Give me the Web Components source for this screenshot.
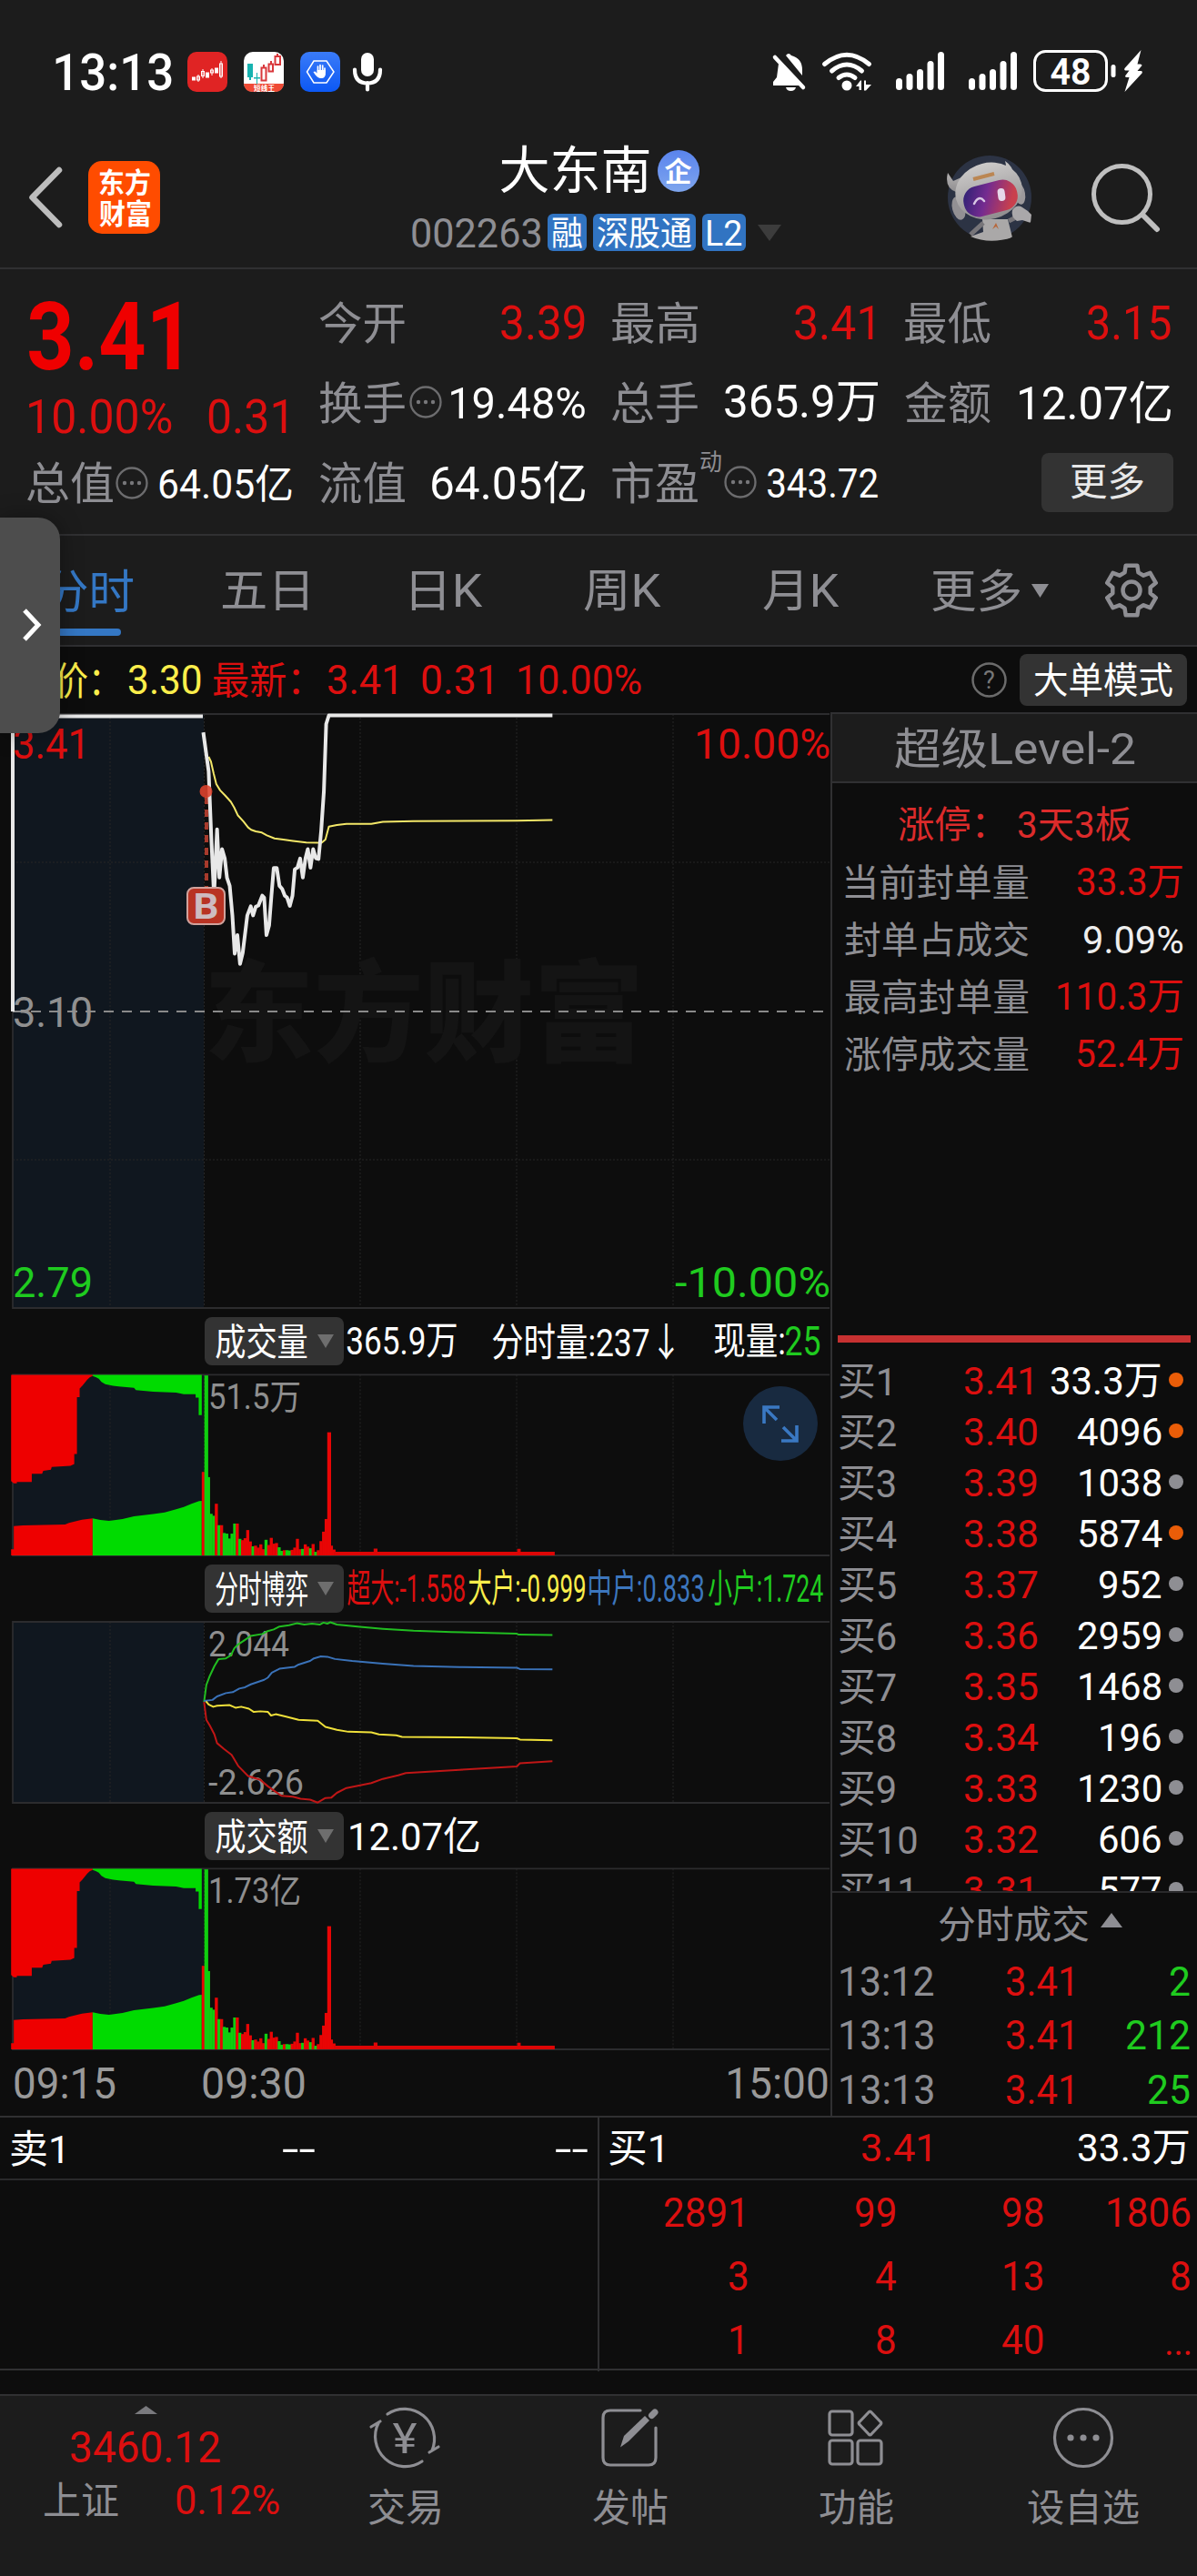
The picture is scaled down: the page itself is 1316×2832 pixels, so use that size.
<!DOCTYPE html>
<html lang="zh-CN">
<head>
<meta charset="utf-8">
<meta name="viewport" content="width=1316">
<title>大东南 002263</title>
<style>
    html, body {
        margin: 0;
        background: #0d0d0d;
    }
    body {
        position: relative;
        width: 1316px;
        height: 2832px;
        overflow: hidden;
        color: #fff;
        font-family: Roboto, "Noto Sans CJK SC", sans-serif;
        --panel: #1c1c1c;
        --line: #303032;
        --muted: #8e8e93;
        --red: #dc0f0f;
        --green: #1fcb1f;
        --blue: #3477c4;
        --yellow: #fbee4b;
    }
</style>
</head>
<body>
<status-bar></status-bar>
<stock-header></stock-header>
<quote-summary></quote-summary>
<period-tabs></period-tabs>
<price-legend></price-legend>
<trade-board></trade-board>
<order-queue></order-queue>
<bottom-nav></bottom-nav>
<side-handle></side-handle>

<script>
const FONT = 'Roboto, "Noto Sans CJK SC", sans-serif';
const pen = document.createElement('canvas').getContext('2d');

// Base class: puts the markup and styles of an element in an open shadow root
class Base extends HTMLElement {
    constructor() {
        super();
        this.attachShadow({ mode: 'open' });
    }

    connectedCallback() {
        this.shadowRoot.innerHTML = `<style>${this.css()}</style>${this.html()}`;
    }

    css() { return ''; }
    html() { return ''; }
}

// One line of text. s = font size, w = width of the drawn glyphs,
// k = horizontal condensing when there is no fixed width.
class FitText extends HTMLElement {
    constructor() {
        super();
        this.attachShadow({ mode: 'open' });
    }

    connectedCallback() {
        const size = +this.getAttribute('s') || 42;
        const weight = this.getAttribute('b') || 400;
        const w = +this.getAttribute('w');
        pen.font = `${weight} ${size}px ${FONT}`;
        const m = pen.measureText(this.textContent.trim());
        const ink = m.actualBoundingBoxLeft + m.actualBoundingBoxRight;
        const k = w ? w / ink : +this.getAttribute('k') || 0.96;
        const dx = w ? m.actualBoundingBoxLeft * k : 0;
        const base = (size + m.fontBoundingBoxAscent - m.fontBoundingBoxDescent) / 2;
        const mid = base - (m.actualBoundingBoxAscent - m.actualBoundingBoxDescent) / 2;
        const box = w || m.width * k;
        this.shadowRoot.innerHTML = `
            <style>
                :host { display: block; flex: none; width: ${box}px; height: ${size}px; }
                span {
                    display: block;
                    width: max-content;
                    font: ${weight} ${size}px/1 ${FONT};
                    white-space: nowrap;
                    transform-origin: 0 0;
                    transform: matrix(${k}, 0, 0, 1, ${dx}, ${size / 2 - mid});
                }
            </style>
            <span><slot></slot></span>`;
    }
}
customElements.define('fit-text', FitText);

class StatusBar extends Base {
    css() {
        return `
            :host { display: flex; align-items: center; height: 158px; box-sizing: border-box; background: var(--panel); }
            svg { display: block; flex: none; }
            fit-text { margin-left: 61px; }
            .right { margin-left: auto; }`;
    }
    html() {
        const signal = x => [[0, 86], [11.5, 81], [23, 76], [34.5, 67], [46, 57]]
            .map(([dx, y]) => `<rect x="${x + dx}" y="${y}" width="7" height="${99 - y}" rx="3.5"/>`).join('');
        const candle = (x, y, h, solid) => `<rect x="${x}" y="${y}" width="3" height="${h}" fill="${solid ? '#fff' : 'none'}"/>`;
        return `
            <fit-text s="55" w="128" b="500">13:13</fit-text>
            <svg width="240" height="158" viewBox="189 0 240 158">
                <defs><linearGradient id="g" x2="0" y2="1"><stop stop-color="#3a7bf8"/><stop offset="1" stop-color="#0c58f4"/></linearGradient></defs>
                <rect x="206" y="57" width="44" height="44" rx="10" fill="#e02424"/>
                <g stroke="#fff" stroke-width="1">
                    ${candle(211.5, 85, 3, 1)}${candle(216.5, 84, 4)}${candle(221.5, 78.5, 5)}${candle(226.5, 80, 5, 1)}${candle(231.5, 77, 3)}${candle(236.5, 75, 5, 1)}${candle(241.5, 70, 14)}
                    <path d="M218 82v8M223 76v10M233 75v8M243 67v19"/>
                </g>
                <rect x="268" y="57" width="44" height="44" rx="10" fill="#fff"/>
                <path d="M268 92h44q-1 9-10 9h-24q-9 0-10-9z" fill="#ef4a35"/>
                <g fill="none" stroke="#d9383c" stroke-width="2">
                    <rect x="287.500" y="74.500" width="5" height="14"/><rect x="295.500" y="70.500" width="4.500" height="8"/><rect x="302.500" y="62" width="5.500" height="9"/>
                    <path d="M290 71v3M298 67v3M305 59v3"/>
                </g>
                <path d="M272 70h6v15h-2v3h-2v-3h-2zM282 80h1v5h3v1.500h-3v6h-1v-6h-3v-1.500h3z" fill="#17b3b0"/>
                <text x="279" y="99.500" font-size="7.500" textLength="23" fill="#fff" font-weight="700" font-family='"Noto Sans CJK SC"'>短线王</text>
                <rect x="330" y="57" width="44" height="44" rx="10" fill="url(#g)"/>
                <path d="M345 67h14l8 12-8 12h-14l-7.500-12z" fill="none" stroke="#fff" stroke-width="1.500"/>
                <path d="M349.500 79v-6M352 78v-6.500M354.700 78v-6M357 79v-4" stroke="#fff" stroke-width="1.700" stroke-linecap="round"/>
                <path d="M348.600 77h9.300v5q-1 4-4 4h-2q-4-1-7.500-7l2-.5 2.200 2z" fill="#fff"/>
                <rect x="397" y="58" width="14" height="26" rx="7" fill="#fff"/>
                <path d="M390 76.500q0 15 14 15t14-15M404 91v7.500" fill="none" stroke="#fff" stroke-width="4.200" stroke-linecap="round"/>
            </svg>
            <svg class="right" width="476" height="158" viewBox="840 0 476 158" fill="#fff">
                <path d="M864 61q3-4 6 0 12 3 12 16v6z"/>
                <path d="M856 70L882 94H850v-4l4-5zM864 96h11q-1 4-5.500 4T864 96z"/>
                <path d="M852 63l31 33" stroke="#fff" stroke-width="4.500" stroke-linecap="round"/>
                <g fill="none" stroke="#fff" stroke-width="5" stroke-linecap="round">
                    <path d="M906.500 70.500q24.500-20.500 49 0M914.500 78q16.500-14 33 0M922 85.500q9-7 18 0"/>
                </g>
                <circle cx="931" cy="94" r="5.500"/>
                <path d="M941 95l5-6.500h1V99h-2.500v-4zM950 88.500h2V93h6l-6 6.500h-2z"/>
                ${signal(985)}${signal(1065)}
                <rect x="1137.500" y="56.500" width="79" height="43" rx="12" fill="none" stroke="#fff" stroke-width="3"/>
                <text x="1154.500" y="92.500" font-size="40" font-weight="600" textLength="45" lengthAdjust="spacingAndGlyphs" font-family="Roboto">48</text>
                <rect x="1221.500" y="71" width="5" height="14" rx="2.500"/>
                <path d="M1254.500 55l-18 20q-1 2 1 2.500h4l-4.500 6q0 1.500 2 1.500h2.500l-5 16 19-20.500q1-2-1-2.500h-4l5-6q0-1.500-2-1.500h-3z"/>
            </svg>`;
    }
}
customElements.define('status-bar', StatusBar);

class StockHeader extends Base {
    css() {
        return `
            :host {
                display: grid;
                grid-template-columns: 450px 1fr 290px;
                height: 138px;
                box-sizing: border-box;
                background: var(--panel);
                border-bottom: 2px solid var(--line);
            }
            svg { display: block; flex: none; }
            .left { display: flex; padding: 19px 0 0 30px; }
            .logo {
                display: grid;
                align-content: center;
                justify-items: center;
                gap: 3px;
                width: 79px;
                height: 80px;
                margin-left: 27px;
                border-radius: 15px;
                background: #ff4c00;
            }
            .name { display: flex; align-items: center; height: 56px; padding: 0 0 0 100.5px; }
            .badge {
                display: grid;
                place-items: center;
                width: 46px;
                height: 46px;
                margin: 3px 0 0 9px;
                border-radius: 50%;
                background: linear-gradient(#5a84ee, #7ea5ed);
            }
            .code { display: flex; align-items: center; margin-top: 21px; height: 41px; padding-left: 3px; color: var(--muted); }
            .tag { display: grid; place-items: center; height: 41px; border-radius: 6px; margin-left: 7px; color: #fff; background: #3174c2; }
            .tag:first-of-type { margin-left: 8px; }
            .tools { display: flex; padding: 13px 0 0 15px; }`;
    }
    html() {
        return `
            <div class="left">
                <svg width="40" height="80" viewBox="0 0 40 80"><path d="M35 10L5.500 40l29.500 30" fill="none" stroke="#bdbdbd" stroke-width="6.500" stroke-linecap="round" stroke-linejoin="round"/></svg>
                <div class="logo"><fit-text s="31" w="56" b="700">东方</fit-text><fit-text s="31" w="56" b="700">财富</fit-text></div>
            </div>
            <div>
                <div class="name">
                    <fit-text s="56" w="163">大东南</fit-text>
                    <span class="badge"><fit-text s="30" w="30" b="700">企</fit-text></span>
                </div>
                <div class="code">
                    <fit-text s="44" w="141">002263</fit-text>
                    <div class="tag" style="width:43px"><fit-text s="37" w="33">融</fit-text></div>
                    <div class="tag" style="width:113px"><fit-text s="37" w="103">深股通</fit-text></div>
                    <div class="tag" style="width:48px"><fit-text s="38" w="37">L2</fit-text></div>
                    <svg style="margin-left:12px" width="28" height="20"><path d="M1 1h26L14 19z" fill="#3c3c3c"/></svg>
                </div>
            </div>
            <div class="tools">
                <svg width="96" height="94" viewBox="0 0 96 94">
                    <defs>
                        <linearGradient id="visor" y2=".3"><stop stop-color="#252070"/><stop offset=".5" stop-color="#742b90"/><stop offset="1" stop-color="#c9404d"/></linearGradient>
                        <linearGradient id="shell" x2="0" y2="1"><stop stop-color="#cccac9"/><stop offset="1" stop-color="#8f8d8f"/></linearGradient>
                        <clipPath id="disc"><path d="M0 0H96V70L66 94H26L0 72z"/></clipPath>
                    </defs>
                    <circle cx="47" cy="46" r="46" fill="#2c3344"/>
                    <g clip-path="url(#disc)">
                        <path d="M39 70h28l5 20q-25 8-46-1l14-5z" fill="#aaa8a8"/>
                        <path d="M40 74l-14 13M68 72l8-4" stroke="#777579" stroke-width="5"/>
                        <path d="M72 60q5-7 11-3l6 4 4 4-1 9-9-3-6 1q-7-5-5-12z" fill="#aaa8aa"/>
                        <path d="M50 81l4-7 3 7-3-3z" fill="#b8673a"/>
                        <path d="M10 40Q-3 35 1 19l6 9 9-4zM59 17q8-1 5-11 12 8 9 22z" fill="url(#shell)"/>
                        <ellipse cx="13" cy="58" rx="7" ry="13" fill="#929093" transform="rotate(-15 13 58)"/>
                        <ellipse cx="80" cy="42" rx="6" ry="12" fill="#9c999c" transform="rotate(-10 80 42)"/>
                        <ellipse cx="46" cy="39" rx="37" ry="31" fill="url(#shell)" transform="rotate(-14 46 39)"/>
                        <rect x="18" y="30" width="60" height="34" rx="16" fill="url(#visor)" transform="rotate(-14 48 47)"/>
                        <path d="M30 53q5-10 11-3" fill="none" stroke="#d9c7e4" stroke-width="2.500" stroke-linecap="round"/>
                        <rect x="56" y="36" width="8" height="14" rx="4" fill="#e6d8ea" transform="rotate(-8 60 43)"/>
                        <path d="M29 26l23-6" stroke="#bb8652" stroke-width="4"/>
                    </g>
                </svg>
                <svg style="margin-left:60px" width="84" height="94" viewBox="1197 171 84 94">
                    <g fill="none" stroke="#bfbfbf" stroke-width="5"><circle cx="1233.500" cy="213.500" r="31"/><path d="M1256 236l16 16" stroke-linecap="round" stroke-width="6"/></g>
                </svg>
            </div>`;
    }
}
customElements.define('stock-header', StockHeader);

// Circled three dots behind a label
class MoreDots extends Base {
    css() { return ':host { display: block; flex: none; width: 36px; height: 36px; } svg { display: block; }'; }
    html() {
        return `<svg width="36" height="36"><circle cx="18" cy="18" r="16.500" fill="none" stroke="#6c6c6e" stroke-width="2.300"/>
            <g fill="#77777a"><circle cx="10" cy="18" r="2.200"/><circle cx="18" cy="18" r="2.200"/><circle cx="26" cy="18" r="2.200"/></g></svg>`;
    }
}
customElements.define('more-dots', MoreDots);

class QuoteSummary extends Base {
    css() {
        return `
            :host {
                display: grid;
                grid-template-columns: repeat(4, 292px);
                column-gap: 30px;
                height: 293px;
                box-sizing: border-box;
                padding: 14px 0 0 30px;
                background: var(--panel);
                border-bottom: 2px solid var(--line);
                color: #fff;
            }
            .main { display: grid; grid-template-rows: 117px 60px 87px; }
            .col { display: grid; grid-template-rows: repeat(3, 88px); margin-left: -1px; }
            .row { display: flex; align-items: center; padding-right: 1px; }
            .row > :last-child { margin-left: auto; }
            .label { color: var(--muted); }
            .up { color: var(--red); }
            .price { color: #ef0000; padding-left: 2px; }
            .row > .start { margin-left: 0; }
            sup { display: block; margin: -46px 0 0 3px; }
            more-dots { margin-left: 5px; }
            .more { display: grid; place-items: center; box-sizing: border-box; width: 145px; height: 65px; margin-right: -3px; padding-bottom: 3px; border-radius: 8px; background: #333; color: #e8e8e8; }`;
    }
    cell(label, w, value, vw, size = 50, up = '', inset = 0) {
        return `<div class="row" style="padding-right:${inset || 1}px"><fit-text class="label" s="49" w="94">${label}</fit-text>${w}<fit-text class="${up}" s="${size}" w="${vw}">${value}</fit-text></div>`;
    }
    html() {
        const dots = '<more-dots></more-dots>';
        return `
            <div class="main">
                <div class="row price"><fit-text class="start" s="103" w="165" b="700">3.41</fit-text></div>
                <div class="row up" style="padding:0 7px 0 2px"><fit-text s="51" w="157">10.00%</fit-text><fit-text s="51" w="86">0.31</fit-text></div>
                ${this.cell('总值', dots.replace('>', ' style="margin-left:3px">'), '64.05亿', 146, 44)}
            </div>
            <div class="col">
                ${this.cell('今开', '', '3.39', 92, 51, 'up')}
                ${this.cell('换手', dots, '19.48%', 147, 49)}
                ${this.cell('流值', '', '64.05亿', 168)}
            </div>
            <div class="col">
                ${this.cell('最高', '', '3.41', 86, 51, 'up', 6)}
                ${this.cell('总手', '', '365.9万', 168)}
                ${this.cell('市盈', '<sup><fit-text class="label" s="26" w="23">动</fit-text></sup><more-dots style="margin-left:3px"></more-dots>', '343.72', 121, 45)}
            </div>
            <div class="col">
                ${this.cell('最低', '', '3.15', 91, 51, 'up')}
                ${this.cell('金额', '', '12.07亿', 166)}
                <div class="row"><span class="more"><fit-text s="43" w="79">更多</fit-text></span></div>
            </div>`;
    }
}
customElements.define('quote-summary', QuoteSummary);

class PeriodTabs extends Base {
    css() {
        return `
            :host {
                display: grid;
                grid-template-columns: 194px 194px 197px 195px 197px 207px 132px;
                height: 122px;
                box-sizing: border-box;
                background: var(--panel);
                border-bottom: 2px solid var(--line);
                color: var(--muted);
            }
            div { display: flex; justify-content: center; align-items: center; box-sizing: border-box; }
            .on { color: var(--blue); flex-direction: column; justify-content: flex-end; gap: 16px; padding-left: 2px; }
            .on::after { content: ""; width: 70px; height: 8px; margin-bottom: 10px; border-radius: 4px; background: var(--blue); }
            svg { display: block; }`;
    }
    gear() {
        const pts = [];
        for (let k = 0; k < 6; k++) {
            [[-21, 21], [-13, 28], [13, 28], [21, 21]].forEach(([a, r]) => {
                const t = (k * 60 + a - 90) * Math.PI / 180;
                pts.push(`${(32 + r * Math.cos(t)).toFixed(1)},${(32 + r * Math.sin(t)).toFixed(1)}`);
            });
        }
        return pts.join(' ');
    }
    html() {
        return `
            <div class="on"><fit-text s="51" w="98">分时</fit-text></div>
            <div><fit-text s="50" w="94">五日</fit-text></div>
            <div style="padding-left:10px"><fit-text s="50" w="79">日K</fit-text></div>
            <div style="padding-left:4px"><fit-text s="50" w="85">周K</fit-text></div>
            <div style="padding-left:4px"><fit-text s="50" w="84">月K</fit-text></div>
            <div style="gap:12px; padding-left:17px"><fit-text s="50" w="97">更多</fit-text><svg width="19" height="15"><path d="M0 0h19L9.500 15z" fill="#8e8e93"/></svg></div>
            <div style="justify-content:flex-start; padding-left:28px"><svg width="64" height="64" fill="none" stroke="#8e8e93" stroke-width="4.500" stroke-linejoin="round"><polygon points="${this.gear()}"/><circle cx="32" cy="32" r="9.500"/></svg></div>`;
    }
}
customElements.define('period-tabs', PeriodTabs);

class PriceLegend extends Base {
    css() {
        return `
            :host { display: flex; align-items: center; height: 72px; padding-left: 24px; color: var(--red); }
            .avg { color: var(--yellow); }
            svg { display: block; margin-left: 363px; }
            .mode { display: grid; place-items: center; width: 184px; height: 57px; margin-left: 14px; border-radius: 8px; background: #333; color: #fff; }`;
    }
    html() {
        return `
            <fit-text class="avg" s="43" w="86">均价：</fit-text>
            <fit-text class="avg" s="44" w="79" style="margin-left:31.500px">3.30</fit-text>
            <fit-text s="42" w="95" style="margin-left:13.500px">最新：</fit-text>
            <fit-text s="44" w="74" style="margin-left:32px">3.41</fit-text>
            <fit-text s="44" w="76" style="margin-left:29px">0.31</fit-text>
            <fit-text s="44" w="135" style="margin-left:30px">10.00%</fit-text>
            <svg width="39" height="39"><circle cx="19.500" cy="19.500" r="18" fill="none" stroke="#6b6b6b" stroke-width="2.500"/><text x="19.500" y="29" text-anchor="middle" font-family="Roboto" font-size="27" fill="#777">?</text></svg>
            <span class="mode"><fit-text s="40" w="152">大单模式</fit-text></span>`;
    }
}
customElements.define('price-legend', PriceLegend);

const GRID_X = [121, 224.5, 396, 568, 740];

function frame(top, bottom) {
    return `
        <rect x="14" y="${top}" width="210" height="${bottom - top}" fill="#10171f"/>
        <g stroke="#262626" stroke-dasharray="2 2">${GRID_X.map(x => `<path d="M${x} ${top}V${bottom}"/>`).join('')}</g>
        <path d="M912 ${top}H14V${bottom}H912" fill="none" stroke="#2c2c2e" stroke-width="1.800"/>`;
}

function label(x, y, w, size, color, text) {
    return `<text x="${x}" y="${y}" textLength="${w}" lengthAdjust="spacingAndGlyphs" font-size="${size}" fill="${color}">${text}</text>`;
}

const CHART_CSS = `
    :host { display: block; }
    svg { display: block; font-family: Roboto, "Noto Sans CJK SC", sans-serif; }
    polyline { fill: none; vector-effect: non-scaling-stroke; stroke-linejoin: round; }`;

class PriceChart extends Base {
    css() { return CHART_CSS; }
    html() {
        return `
            <svg width="914" height="657" viewBox="0 783 914 657">
                ${frame(785, 1438)}
                <g stroke="#262626" stroke-dasharray="2 2"><path d="M14 948H912M14 1275H912"/></g>
                <text x="224" y="1157" font-size="121" font-weight="900" textLength="484" fill="#141414">东方财富</text>
                <path d="M14 1112H912" stroke="#8a8a8a" stroke-width="2" stroke-dasharray="11 9"/>
                <path d="M14 1112V787.500H223" fill="none" stroke="#e8e8e8" stroke-width="4"/>
                ${label(14, 834, 85, 46, '#dc0f0f', '3.41')}
                ${label(14, 1129, 88, 46, '#909090', '3.10')}
                ${label(14, 1426, 88, 46, '#1fcb1f', '2.79')}
                ${label(763, 834, 150, 46, '#dc0f0f', '10.00%')}
                ${label(742, 1426, 171, 46, '#1fcb1f', '-10.00%')}
                <path d="M227 876V975" stroke="#a83a2c" stroke-width="4" stroke-dasharray="8 6"/>
                <g transform="translate(0 770) scale(.4209 .4337)">
                    <polyline stroke="#f3e768" stroke-width="2" points="545,143 551,155 558,185 565,212 575,228 588,241 603,257 612,272 621,291 636,307 648,322 656,328 668,332 684,335 697,342 717,350 740,353 765,356 800,360 840,361 850,353 859,320 880,316 905,313 970,313 1000,308 1080,306 1350,305 1443,303"/>
                    <polyline stroke="#e8e8e8" stroke-width="4" points="531,81 545,180 552,350 559,496 567,327 573,449 580,377 587,400 593,450 600,470 607,545 613,642 620,595 627,668 634,640 646,545 655,522 661,545 668,523 675,520 685,495 690,500 696,595 703,570 709,495 715,425 723,425 730,470 737,478 744,495 750,500 757,521 764,495 770,428 777,424 784,401 791,449 798,400 804,377 811,424 818,377 825,400 832,402 839,330 846,230 852,60 859,38 1443,38"/>
                </g>
                <circle cx="226.500" cy="870" r="7" fill="#e0432e" fill-opacity=".88"/>
                <rect x="206" y="976" width="41" height="40" rx="7" fill="#b83323" stroke="#d0a29c" stroke-width="2"/>
                <text x="226.500" y="1009.500" text-anchor="middle" textLength="28" lengthAdjust="spacingAndGlyphs" font-size="38" font-weight="700" fill="#cdbcc0">B</text>
            </svg>`;
    }
}
customElements.define('price-chart', PriceChart);

// [top, is red] of each minute bar after the opening
const BARS = [
    [527, 1], [230, 0], [543, 0], [656, 0], [662, 0], [625, 1], [691, 0], [691, 1], [715, 0], [717, 0],
    [732, 0], [717, 0], [686, 0], [686, 1], [733, 0], [737, 1], [731, 1], [706, 1], [741, 1], [756, 0],
    [754, 1], [760, 1], [750, 1], [765, 1], [736, 0], [752, 1], [730, 1], [748, 1], [746, 1], [759, 0],
    [770, 0], [768, 1], [768, 0], [769, 0], [767, 1], [760, 1], [733, 1], [765, 1], [764, 0], [750, 1],
    [757, 1], [762, 0], [749, 1], [773, 0], [768, 1], [740, 1], [711, 1], [672, 1], [405, 1], [754, 1], [766, 1]
];

class VolumeChart extends Base {
    css() {
        return CHART_CSS + `
            :host { position: relative; }
            .zoom { position: absolute; left: 817px; top: 14px; }`;
    }
    html() {
        const bars = BARS.map(([y, red], i) =>
            `<rect x="${(527 + i * 6.83).toFixed(1)}" y="${y}" width="${y < 420 ? 10 : 8}" height="${784 - y}" fill="${red ? '#e80505' : '#0fcf0f'}"/>`).join('');
        const zoom = this.hasAttribute('zoomable') ? `
            <svg class="zoom" width="82" height="82"><circle cx="41" cy="41" r="41" fill="#182a40"/>
                <g fill="none" stroke="#3a78c2" stroke-width="3.600"><path d="M23 41V23H40M24 24L37 37"/><path d="M59 43V60H42M58 59L44 45"/></g></svg>` : '';
        return `
            <svg width="914" height="202" viewBox="0 1510 914 202">
                ${frame(1511.4, 1710)}
                <g transform="translate(0 1430) scale(.4209 .3571)">
                    <path fill="#ee0000" d="M29 228H242V232L235 235 228 243 215 262 208 270V297H201V472H194V503L184 508 135 512 133 520 113 524 110 533H83V558H44V562H36L29 555z"/>
                    <path fill="#00db00" d="M242 228H527V352H519V298H511V288H480L460 283 400 280 355 275 350 268 310 264 295 262 275 257 265 250 258 240 250 235 242 232z"/>
                    <path fill="#ee0000" d="M29 765H36V694L60 692 170 689 180 684 214 674 242 670V784H29z"/>
                    <path fill="#00db00" d="M242 670L262 675 285 678 320 672 350 664 400 657 430 652 460 642 480 635 500 625 520 617 527 616V784H242z"/>
                    ${bars}
                    <path fill="#dd0606" d="M872 773H976V763H986V773H1351V764H1360V773H1449V784H872z"/>
                </g>
                ${label(229, 1549, 102, 38, '#8f8f8f', this.getAttribute('max'))}
            </svg>${zoom}`;
    }
}
customElements.define('volume-chart', VolumeChart);

class FlowChart extends Base {
    css() { return CHART_CSS; }
    html() {
        return `
            <svg width="914" height="203" viewBox="0 1781 914 203">
                ${frame(1783, 1982)}
                ${label(229, 1821, 89, 38, '#8f8f8f', '2.044')}
                ${label(229, 1973, 105, 38, '#8f8f8f', '-2.626')}
                <g transform="translate(0 1430) scale(.4209 .3571)" stroke-width="2">
                    <polyline stroke="#21bd21" points="533,1235 539,1183 548,1155 560,1125 571,1103 590,1101 603,1092 612,1070 622,1058 640,1044 655,1032 685,1026 697,1018 715,1012 730,1003 755,999 775,993 795,997 815,994 835,997 845,991 855,994 863,990 880,997 940,1004 1000,1010 1080,1016 1180,1020 1350,1025 1355,1028 1443,1029"/>
                    <polyline stroke="#3a72b8" points="533,1232 555,1229 567,1218 590,1208 608,1205 625,1194 640,1190 655,1181 690,1167 700,1160 710,1145 730,1133 770,1127 780,1120 810,1109 820,1101 838,1095 855,1096 875,1103 920,1109 1000,1117 1080,1124 1200,1128 1350,1130 1358,1134 1443,1135"/>
                    <polyline stroke="#efe03a" points="538,1233 545,1243 557,1250 567,1247 600,1245 615,1253 630,1250 650,1256 663,1266 680,1264 700,1266 708,1277 720,1273 745,1280 780,1290 830,1293 850,1312 880,1321 910,1327 970,1329 990,1335 1035,1338 1050,1343 1200,1344 1350,1347 1358,1351 1443,1353"/>
                    <polyline stroke="#c01616" points="533,1235 539,1290 548,1308 560,1335 567,1362 585,1380 605,1398 622,1432 648,1463 680,1475 700,1495 720,1512 735,1524 765,1527 785,1533 810,1536 830,1545 850,1531 865,1530 880,1515 905,1500 970,1485 1000,1472 1040,1461 1060,1454 1200,1444 1350,1434 1358,1424 1443,1418"/>
                </g>
            </svg>`;
    }
}
customElements.define('flow-chart', FlowChart);

// Caption above a sub chart: a picker and, slotted, its values
class IndicatorBar extends Base {
    css() {
        return `
            :host { display: flex; align-items: center; height: 69px; box-sizing: border-box; padding: 0 0 2px 225px; color: #fff; }
            .pick { display: flex; align-items: center; justify-content: space-between; box-sizing: border-box; width: 153px; height: 53px; padding: 0 11px 0 12px; margin: 1px 4px 0 0; border-radius: 8px; background: #333; }
            svg { display: block; }`;
    }
    html() {
        return `<span class="pick"><fit-text s="41" w="101">${this.getAttribute('name')}</fit-text><svg width="18" height="15"><path d="M0 0h18L9 15z" fill="#6e6e6e"/></svg></span><slot></slot>`;
    }
}
customElements.define('indicator-bar', IndicatorBar);

class LimitUpInfo extends Base {
    css() {
        return `
            :host { display: block; height: 683px; }
            .title { display: grid; place-items: center; height: 74px; background: var(--panel); border-bottom: 2px solid var(--line); color: var(--muted); }
            .streak { display: grid; place-items: center; height: 66px; padding-top: 11px; color: #dc2b2b; }
            .row { display: flex; align-items: center; justify-content: space-between; height: 63px; padding: 0 16px 0 14px; color: var(--red); }
            .row :first-child { color: var(--muted); }
            .row.flat { color: #eee; }`;
    }
    html() {
        const rows = [['当前封单量', '33.3万', 116], ['封单占成交', '9.09%', 108], ['最高封单量', '110.3万', 137], ['涨停成交量', '52.4万', 115]];
        return `
            <div class="title"><fit-text s="48" w="264">超级Level-2</fit-text></div>
            <div class="streak"><fit-text s="41" w="255">涨停：3天3板</fit-text></div>
            ${rows.map(([a, b, w]) => `<div class="row ${b === '9.09%' ? 'flat' : ''}"><fit-text s="41" w="202">${a}</fit-text><fit-text s="42" w="${w}">${b}</fit-text></div>`).join('')}`
            .replace('涨停：3', '涨停： 3');
    }
}
customElements.define('limit-up-info', LimitUpInfo);

class BuyBook extends Base {
    css() {
        return `
            :host { display: block; height: 613px; box-sizing: border-box; overflow: hidden; border-bottom: 2px solid #29292b; }
            .ratio { height: 7.500px; margin: 0 7px 15px 6px; background: #c63131; }
            .row { display: grid; grid-template-columns: 138px 70px 1fr 38px; align-items: center; height: 56.060px; padding-left: 6px; }
            .row :nth-child(1) { color: var(--muted); }
            .row :nth-child(2) { color: var(--red); }
            .row :nth-child(3) { justify-self: end; }
            i { width: 16px; height: 16px; margin: -4px 0 0 7px; border-radius: 50%; background: #8e8e93; }
            i.hot { background: #ea5d08; }`;
    }
    html() {
        const book = [['3.41', '33.3万', 1], ['3.40', '4096', 1], ['3.39', '1038'], ['3.38', '5874', 1], ['3.37', '952'], ['3.36', '2959'],
            ['3.35', '1468'], ['3.34', '196'], ['3.33', '1230'], ['3.32', '606'], ['3.31', '577']];
        return `<div class="ratio"></div>` + book.map(([p, q, hot], i) => `
            <div class="row"><fit-text s="43" k=".97">买${i + 1}</fit-text><fit-text s="43" k=".99">${p}</fit-text><fit-text s="43" k=".975">${q}</fit-text><i class="${hot ? 'hot' : ''}"></i></div>`).join('');
    }
}
customElements.define('buy-book', BuyBook);

class TickList extends Base {
    css() {
        return `
            :host { display: block; height: 245px; overflow: hidden; }
            .head { display: flex; align-items: center; gap: 13px; height: 67px; padding-left: 117px; color: var(--muted); }
            .row { display: grid; grid-template-columns: 181px 90px 1fr; align-items: center; height: 59.400px; padding: 0 7px 0 9px; }
            .row :nth-child(1) { color: var(--muted); }
            .row :nth-child(2) { color: var(--red); }
            .row :nth-child(3) { justify-self: end; color: var(--green); }
            svg { display: block; margin-top: -8px; }`;
    }
    html() {
        return `
            <div class="head"><fit-text s="42" w="165">分时成交</fit-text><svg width="24" height="16"><path d="M12 0l12 16H0z" fill="#8e8e93"/></svg></div>
            ${[['13:12', '2'], ['13:13', '212'], ['13:13', '25']].map(([t, q]) => `
            <div class="row"><fit-text s="43.500" w="102">${t}</fit-text><fit-text s="43.500" k=".96">3.41</fit-text><fit-text s="43.500" k=".98">${q}</fit-text></div>`).join('')}`;
    }
}
customElements.define('tick-list', TickList);

class TradeBoard extends Base {
    css() {
        return `
            :host { display: grid; grid-template-columns: 913px 1fr; height: 1543px; }
            .side { border-left: 2px solid var(--line); border-top: 2px solid var(--line); }
            .times { display: flex; align-items: center; height: 70px; padding: 0 3px 0 16px; color: #999; }
            .red { color: var(--red); }
            .green { color: var(--green); }
            .yellow { color: var(--yellow); }
            .blue { color: #3c76bd; }`;
    }
    html() {
        return `
            <div>
                <price-chart></price-chart>
                <indicator-bar name="成交量" style="height:70px">
                    <fit-text s="43" w="120">365.9万</fit-text>
                    <fit-text s="43" w="200" style="margin-left:39px">分时量:237↓</fit-text>
                    <fit-text s="42" w="77" style="margin-left:44px">现量:</fit-text>
                    <fit-text class="green" s="44" w="37" style="margin-left:2px">25</fit-text>
                </indicator-bar>
                <volume-chart max="51.5万" zoomable></volume-chart>
                <indicator-bar name="分时博弈">
                    <fit-text class="red" s="42" w="129">超大:-1.558</fit-text>
                    <fit-text class="yellow" s="42" w="128" style="margin-left:4px">大户:-0.999</fit-text>
                    <fit-text class="blue" s="42" w="125" style="margin-left:5px">中户:0.833</fit-text>
                    <fit-text class="green" s="42" w="126" style="margin-left:6px">小户:1.724</fit-text>
                </indicator-bar>
                <flow-chart></flow-chart>
                <indicator-bar name="成交额"><fit-text s="43" w="142" style="margin-left:3px">12.07亿</fit-text></indicator-bar>
                <volume-chart max="1.73亿"></volume-chart>
                <div class="times"><fit-text s="48" w="111">09:15</fit-text><fit-text s="48" w="112" style="margin-left:96px">09:30</fit-text><fit-text s="48" w="109" style="margin-left:auto">15:00</fit-text></div>
            </div>
            <div class="side">
                <limit-up-info></limit-up-info>
                <buy-book></buy-book>
                <tick-list></tick-list>
            </div>`;
    }
}
customElements.define('trade-board', TradeBoard);

class OrderQueue extends Base {
    css() {
        return `
            :host { display: grid; grid-template-columns: 657px 1fr; height: 280px; box-sizing: border-box; border: solid var(--line); border-width: 2px 0; color: #fff; }
            .buy { border-left: 2px solid var(--line); }
            .top { display: grid; align-items: center; height: 67px; border-bottom: 2px solid #29292b; }
            .sell .top { grid-template-columns: 298px 1fr auto; padding: 0 10px 0 12px; }
            .buy .top { grid-template-columns: 278px 1fr auto; padding: 0 9px 0 11px; }
            .red { color: var(--red); }
            .cells { display: grid; grid-template-columns: 165px 162px 162px 162px; grid-auto-rows: 70px; align-items: center; justify-items: end; color: var(--red); }
            .low { margin-top: 6px; }`;
    }
    html() {
        const cells = [2891, 99, 98, 1806, 3, 4, 13, 8, 1, 8, 40];
        return `
            <div class="sell"><div class="top"><fit-text s="43" w="57">卖1</fit-text><fit-text class="low" s="43" w="37">--</fit-text><fit-text class="low" s="43" w="37">--</fit-text></div></div>
            <div class="buy">
                <div class="top"><fit-text s="43" w="58">买1</fit-text><fit-text class="red" s="43" w="74.500">3.41</fit-text><fit-text s="43" w="121">33.3万</fit-text></div>
                <div class="cells">${cells.map(n => `<fit-text s="43.500" k=".97">${n}</fit-text>`).join('')}<fit-text s="43" w="25" style="margin:28px 2px 0 0">...</fit-text></div>
            </div>`;
    }
}
customElements.define('order-queue', OrderQueue);

class NavItem extends Base {
    css() {
        return `
            :host { display: flex; flex-direction: column; align-items: center; padding-top: 10px; color: var(--muted); }
            ::slotted(svg) { display: block; width: 84px; height: 72px; margin-bottom: 19px; fill: none; stroke: #8e8e93; stroke-width: 3.2px; stroke-linecap: round; stroke-linejoin: round; }`;
    }
    html() { return `<slot></slot><fit-text s="42" w="${this.getAttribute('w')}">${this.getAttribute('name')}</fit-text>`; }
}
customElements.define('nav-item', NavItem);

class BottomNav extends Base {
    css() {
        return `
            :host { display: grid; grid-template-columns: 320px 249px 248px 248px 251px; height: 200px; box-sizing: border-box; margin-top: 26px; background: var(--panel); border-top: 2px solid var(--line); }
            .index { display: flex; flex-direction: column; align-items: center; color: var(--red); }
            .index > svg { display: block; margin: 11px 0 12px; }
            .line { display: flex; align-items: center; align-self: stretch; height: 48px; margin-top: 10px; padding: 0 13px 0 49px; justify-content: space-between; }
            .muted { color: var(--muted); }`;
    }
    html() {
        return `
            <div class="index">
                <svg width="25" height="9"><path d="M12.500 0L25 9H0z" fill="#7a7a7e"/></svg>
                <fit-text s="48" w="164">3460.12</fit-text>
                <div class="line"><fit-text class="muted" s="42" w="81">上证</fit-text><fit-text s="44" w="113">0.12%</fit-text></div>
            </div>
            <nav-item name="交易" w="79"><svg viewBox="0 0 84 72"><path d="M23 10A33 33 0 0 1 72 50M79 46L69 52M61 62A33 33 0 0 1 13.500 19M5 24L15 18"/><text x="42" y="53" text-anchor="middle" textLength="27" lengthAdjust="spacingAndGlyphs" font-family="Roboto" font-size="46" stroke="none" fill="#8e8e93">¥</text></svg></nav-item>
            <nav-item name="发帖" w="82"><svg viewBox="-9 -3 84 72"><path d="M44 3H11Q3 3 3 11V55Q3 63 11 63H53Q61 63 61 55V22"/><path d="M22 43.500L26 31 49 9 54 14 31 37z" fill="#8e8e93" stroke="none"/><path d="M56.500 8.500L60 5" stroke-width="7"/></svg></nav-item>
            <nav-item name="功能" w="81"><svg viewBox="-11 -4 84 72"><rect x="2" y="3" width="25" height="26" rx="3"/><rect x="2" y="35" width="25" height="26" rx="3"/><rect x="33" y="35" width="26" height="26" rx="3"/><path d="M45 4Q46.500 2 48 4L58 14.500Q59.500 16 58 17.500L48 28Q46.500 30 45 28L35 17.500Q33.500 16 35 14.500z"/></svg></nav-item>
            <nav-item name="设自选" w="122"><svg viewBox="0 0 84 72"><circle cx="42" cy="36" r="31.500"/><g fill="#8e8e93" stroke="none"><circle cx="28" cy="36" r="3.600"/><circle cx="42" cy="36" r="3.600"/><circle cx="56" cy="36" r="3.600"/></g></svg></nav-item>`;
    }
}
customElements.define('bottom-nav', BottomNav);

// Drawer handle floating over the left edge
class SideHandle extends Base {
    css() {
        return `
            :host { position: absolute; left: 0; top: 569px; width: 66px; height: 237px; border-radius: 0 24px 24px 0; background: #4d4d4d; box-shadow: 0 0 24px rgba(0, 0, 0, .35); }
            svg { display: block; margin: 99px 0 0 22px; }`;
    }
    html() { return '<svg width="25" height="38"><path d="M5 3l15 16L5 35" fill="none" stroke="#fff" stroke-width="5"/></svg>'; }
}
customElements.define('side-handle', SideHandle);
</script>
</body>
</html>
